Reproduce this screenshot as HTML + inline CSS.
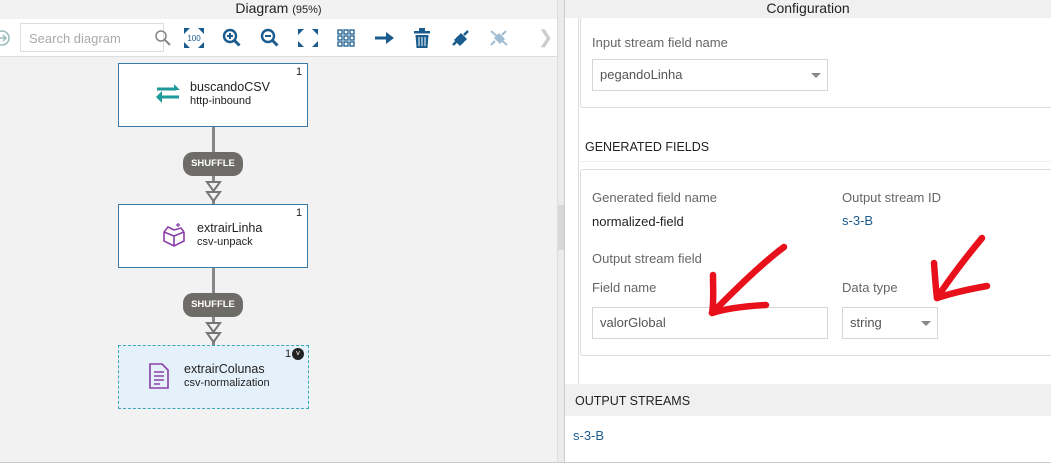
<!DOCTYPE html>
<html><head><style>
*{box-sizing:border-box;margin:0;padding:0}
body{width:1051px;height:471px;background:#fff;font-family:"Liberation Sans",sans-serif;position:relative;overflow:hidden;color:#222}
.a{position:absolute}
.node{position:absolute;background:#fff;border:1px solid #3a78a8}
.nm{position:absolute;font-size:12.5px;color:#222}
.sub{position:absolute;font-size:11px;color:#222}
.num{position:absolute;font-size:11px;color:#222}
.sh{position:absolute;left:183px;width:60px;height:24px;border-radius:10px;background:#6e6c69;color:#fff;font-size:9.5px;font-weight:bold;text-align:center;line-height:24px}
.lbl{position:absolute;font-size:13px;color:#666}
.inp{position:absolute;border:1px solid #d6d6d6;background:#fff;font-size:13px;color:#555;padding-left:7px}
.caret{position:absolute;width:0;height:0;border-left:5px solid transparent;border-right:5px solid transparent;border-top:5px solid #888}
</style></head><body>
<!-- left panel -->
<div class="a" style="left:0;top:0;width:557px;height:462px;background:#f2f2f2"></div>
<div class="a" style="left:0;top:0;width:557px;height:18px;text-align:center;font-size:14px;line-height:17px;color:#222">Diagram <span style="font-size:11px">(95%)</span></div>
<div class="a" style="left:0;top:19px;width:557px;height:38px;background:#fff;border-bottom:1px solid #ddd"></div>
<svg class="a" style="left:0;top:28px" width="12" height="20"><circle cx="2" cy="10" r="7" fill="none" stroke="#9bb" stroke-width="1.5"/><path d="M0 10h5M3 7l3 3-3 3" stroke="#9bb" fill="none" stroke-width="1.5"/></svg>
<div class="a" style="left:20px;top:23px;width:144px;height:29px;border:1px solid #ddd;background:#fff;font-size:13px;color:#aaa;padding:7px 0 0 8px">Search diagram</div>
<svg class="a" style="left:154px;top:29px" width="18" height="18"><circle cx="7" cy="7" r="5" fill="none" stroke="#888" stroke-width="1.6"/><path d="M11 11l5 5" stroke="#888" stroke-width="2"/></svg>
<svg class="a" style="left:184px;top:28px" width="20" height="20" fill="#1a5c8e"><path d="M0 0h6L0 6zM20 0h-6l6 6zM0 20h6L0 14zM20 20h-6l6-6z"/><text x="10" y="13" font-size="8" text-anchor="middle" font-family="Liberation Sans">100</text></svg>
<svg class="a" style="left:222px;top:28px" width="20" height="20"><circle cx="8" cy="8" r="6" fill="none" stroke="#1a5c8e" stroke-width="2.4"/><path d="M12.5 12.5l5 5" stroke="#1a5c8e" stroke-width="3"/><path d="M5 8h6M8 5v6" stroke="#1a5c8e" stroke-width="2"/></svg>
<svg class="a" style="left:260px;top:28px" width="20" height="20"><circle cx="8" cy="8" r="6" fill="none" stroke="#1a5c8e" stroke-width="2.4"/><path d="M12.5 12.5l5 5" stroke="#1a5c8e" stroke-width="3"/><path d="M5 8h6" stroke="#1a5c8e" stroke-width="2"/></svg>
<svg class="a" style="left:298px;top:29px" width="20" height="18" fill="#1a5c8e"><path d="M0 0h6L0 6zM20 0h-6l6 6zM0 18h6L0 12zM20 18h-6l6-6z"/></svg>
<svg class="a" style="left:337px;top:29px" width="18" height="18" fill="none" stroke="#1a5c8e" stroke-width="1.3"><rect x="1" y="1" width="4" height="4"/><rect x="7" y="1" width="4" height="4"/><rect x="13" y="1" width="4" height="4"/><rect x="1" y="7" width="4" height="4"/><rect x="7" y="7" width="4" height="4"/><rect x="13" y="7" width="4" height="4"/><rect x="1" y="13" width="4" height="4"/><rect x="7" y="13" width="4" height="4"/><rect x="13" y="13" width="4" height="4"/></svg>
<svg class="a" style="left:375px;top:31px" width="20" height="14" fill="#1a5c8e"><path d="M0 5.5h12v3H0z"/><path d="M11 1l8 6-8 6z"/></svg>
<svg class="a" style="left:414px;top:28px" width="16" height="20" fill="#1a5c8e"><rect x="0" y="3" width="16" height="2.5"/><rect x="5" y="0" width="6" height="3"/><path d="M1.5 7h13l-1 13h-11z"/><path d="M5 9v9M8 9v9M11 9v9" stroke="#fff" stroke-width="1"/></svg>
<svg class="a" style="left:450px;top:28px" width="22" height="20"><path d="M3 17l4-4M18 3l-4 4" stroke="#1a5c8e" stroke-width="2.5"/><path d="M6 10l5-5 6 6-5 5z" fill="#1a5c8e"/><path d="M4 12l4-4 6 6-4 4z" fill="#1a5c8e"/></svg>
<svg class="a" style="left:488px;top:28px" width="22" height="20" opacity=".4"><path d="M3 17l4-4M18 3l-4 4M3 3l16 14" stroke="#1a5c8e" stroke-width="2"/><path d="M6 10l5-5 6 6-5 5z" fill="#1a5c8e"/></svg>
<div class="a" style="left:538px;top:27px;font-size:18px;color:#ccc">❯</div>

<!-- connectors -->
<div class="a" style="left:212px;top:127px;width:3px;height:78px;background:#888"></div>
<div class="a" style="left:212px;top:268px;width:3px;height:78px;background:#888"></div>
<div class="sh" style="top:152px">SHUFFLE</div>
<div class="sh" style="top:293px">SHUFFLE</div>
<svg class="a" style="left:205px;top:180px" width="17" height="24"><path d="M2 2h13l-6.5 9zM2 12h13l-6.5 9z" fill="#f2f2f2" stroke="#777" stroke-width="2"/></svg>
<svg class="a" style="left:205px;top:321px" width="17" height="24"><path d="M2 2h13l-6.5 9zM2 12h13l-6.5 9z" fill="#f2f2f2" stroke="#777" stroke-width="2"/></svg>

<div class="node" style="left:118px;top:63px;width:190px;height:64px"></div>
<svg class="a" style="left:155px;top:83px" width="26" height="20" fill="#1e9a9a"><path d="M2 5h17v-4l6 6-6 0z"/><rect x="2" y="4.5" width="19" height="3"/><rect x="5" y="12.5" width="19" height="3"/><path d="M1 14l6-6v12z"/></svg>
<div class="nm" style="left:190px;top:80px">buscandoCSV</div>
<div class="sub" style="left:190px;top:95px">http-inbound</div>
<div class="num" style="left:296px;top:66px">1</div>

<div class="node" style="left:118px;top:204px;width:190px;height:64px"></div>
<svg class="a" style="left:161px;top:222px" width="26" height="26" fill="none" stroke="#8b3fa8" stroke-width="1.6"><path d="M3 10l10 4 10-4M3 10v9l10 5 10-5v-9M13 14v10M3 10l4-5 6 3M23 10l-3-4-7 2"/><path d="M17 1v4M15 3h4" stroke-width="1.3"/></svg>
<div class="nm" style="left:197px;top:221px">extrairLinha</div>
<div class="sub" style="left:197px;top:236px">csv-unpack</div>
<div class="num" style="left:296px;top:207px">1</div>

<div class="a" style="left:118px;top:345px;width:191px;height:64px;background:#e4f1fb;border:1px dashed #3aa6b6"></div>
<svg class="a" style="left:148px;top:362px" width="22" height="28" fill="none" stroke="#8b3fa8" stroke-width="1.6"><path d="M2 2h12l6 6v18H2z"/><path d="M6 10h10M6 14h10M6 18h10M6 22h6"/></svg>
<div class="nm" style="left:184px;top:362px">extrairColunas</div>
<div class="sub" style="left:184px;top:377px">csv-normalization</div>
<div class="num" style="left:285px;top:348px">1</div>
<div class="a" style="left:292px;top:348px;width:12px;height:12px;border-radius:50%;background:#222;color:#fff;font-size:8px;text-align:center;line-height:12px">˅</div>

<!-- splitter -->
<div class="a" style="left:557px;top:0;width:8px;height:462px;background:#ebebeb;border-left:1px solid #ddd;border-right:1px solid #ccc"></div>
<div class="a" style="left:558px;top:205px;width:6px;height:45px;background:#d8d8d8"></div>

<!-- right panel -->
<div class="a" style="left:565px;top:18px;width:14px;height:366px;background:#fff;border-right:1px solid #ddd"></div>
<div class="a" style="left:580px;top:0;width:480px;height:108px;border:1px solid #ddd;border-radius:3px"></div>
<div class="a" style="left:565px;top:0;width:486px;height:18px;background:#f0f0f0;text-align:center;font-size:14px;line-height:17px;color:#222">Configuration</div>
<div class="lbl" style="left:592px;top:35px">Input stream field name</div>
<div class="inp" style="left:592px;top:59px;width:236px;height:32px;line-height:30px">pegandoLinha</div>
<div class="caret" style="left:811px;top:73px"></div>
<div class="a" style="left:585px;top:140px;font-size:12.5px;color:#222">GENERATED FIELDS</div>
<div class="a" style="left:578px;top:161px;width:480px;height:1px;background:#eee"></div>
<div class="a" style="left:580px;top:169px;width:480px;height:187px;border:1px solid #ddd;border-radius:3px"></div>
<div class="lbl" style="left:592px;top:190px">Generated field name</div>
<div class="a" style="left:592px;top:214px;font-size:13px;color:#222">normalized-field</div>
<div class="lbl" style="left:842px;top:190px">Output stream ID</div>
<div class="a" style="left:842px;top:213px;font-size:13px;color:#1d5c8f">s-3-B</div>
<div class="lbl" style="left:592px;top:251px">Output stream field</div>
<div class="lbl" style="left:592px;top:280px">Field name</div>
<div class="lbl" style="left:842px;top:280px">Data type</div>
<div class="inp" style="left:592px;top:307px;width:236px;height:32px;line-height:30px">valorGlobal</div>
<div class="inp" style="left:842px;top:307px;width:96px;height:32px;line-height:30px">string</div>
<div class="caret" style="left:921px;top:321px"></div>
<div class="a" style="left:565px;top:384px;width:486px;height:32px;background:#f0f0f0;font-size:12.5px;padding:10px 0 0 10px;color:#222">OUTPUT STREAMS</div>
<div class="a" style="left:573px;top:428px;font-size:13px;color:#1d5c8f">s-3-B</div>
<div class="a" style="left:0;top:462px;width:1051px;height:9px;background:#fff;border-top:1px solid #ccc"></div>

<!-- red arrows -->
<svg class="a" style="left:0;top:0" width="1051" height="471" fill="none" stroke="#e8101a" stroke-width="6.5" stroke-linecap="round" stroke-linejoin="round">
<path d="M784 247C760 265 735 290 712 313"/>
<path d="M713 275C713 290 714 303 712 313C728 308 748 306 766 305"/>
<path d="M982 238C968 255 950 278 937 298"/>
<path d="M934 263C935 277 936 290 937 298C952 293 970 289 987 286"/>
</svg>
</body></html>
